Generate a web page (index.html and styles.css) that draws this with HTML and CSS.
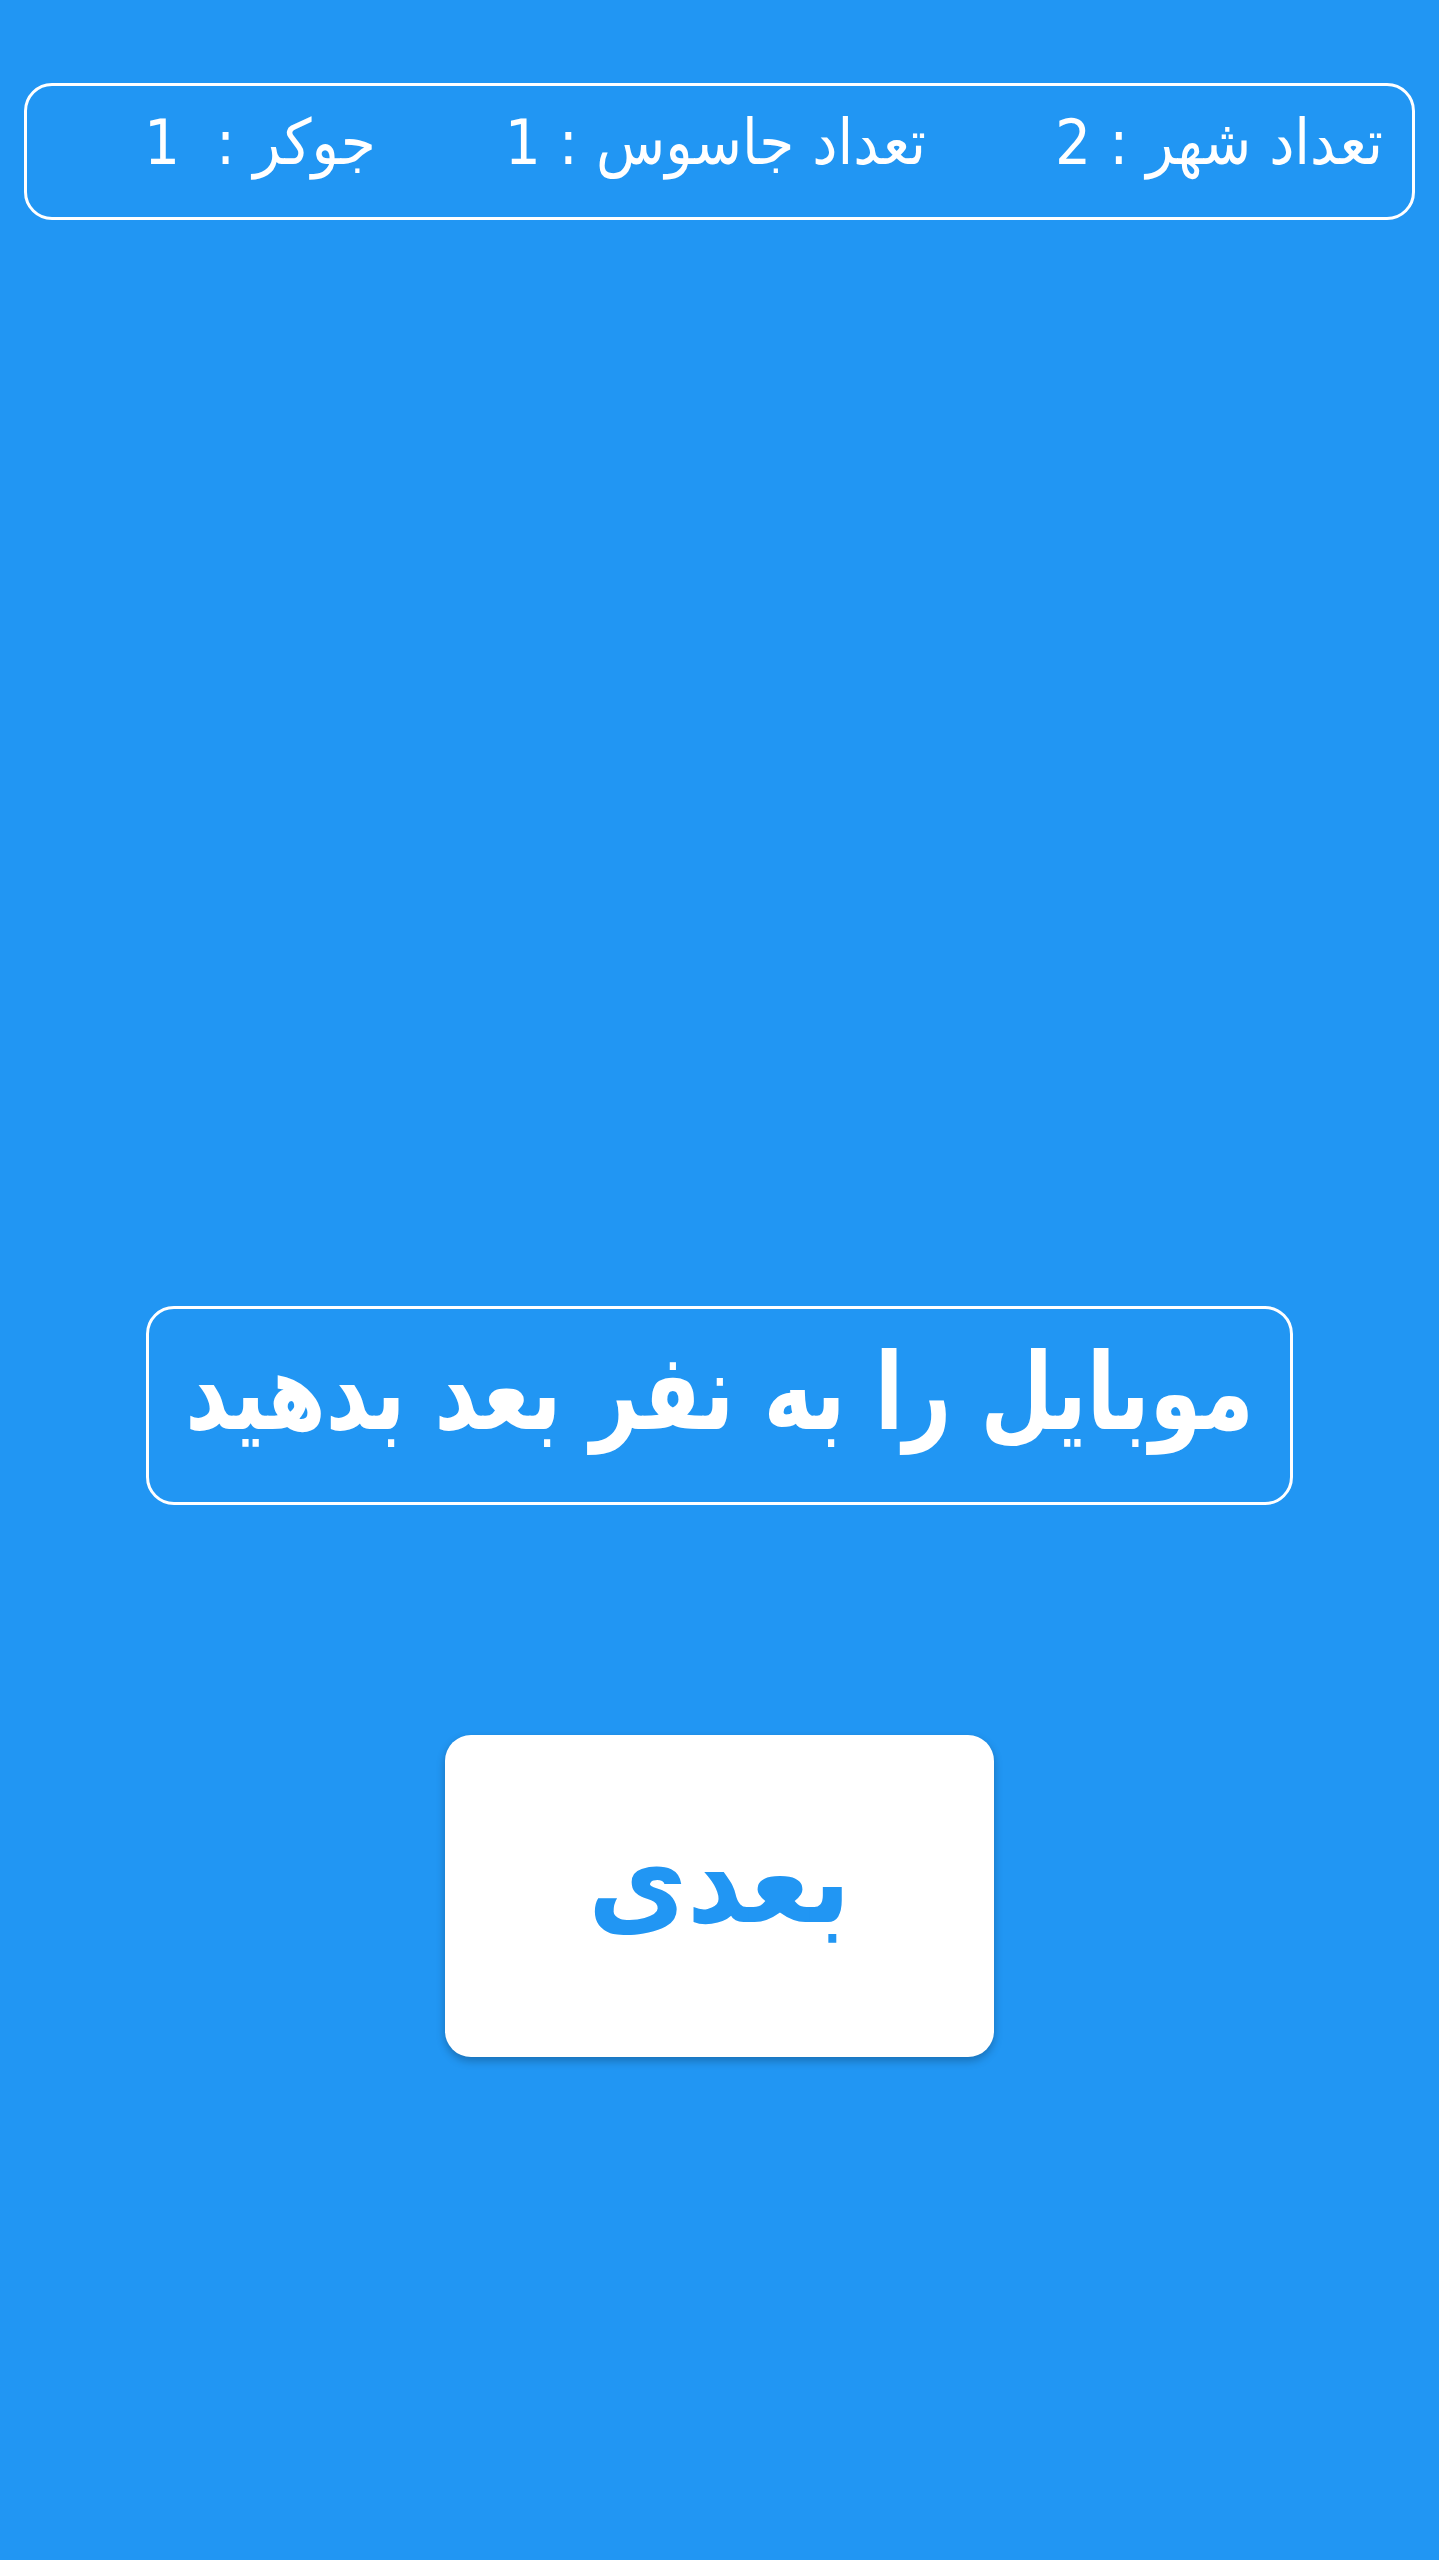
FILE: index.html
```html
<!DOCTYPE html>
<html lang="fa" dir="rtl">
<head>
    <meta charset="UTF-8">
    <meta name="viewport" content="width=device-width, initial-scale=1.0">
    <title>نقش بعدی</title>
    <link rel="stylesheet" href="styles.css">
</head>
<body>
    <div class="counts">
        <span class="count">تعداد شهر : 2</span>
        <span class="count">تعداد جاسوس : 1</span>
        <span class="count">جوکر :&nbsp; 1</span>
    </div>

    <div class="message"><span class="tall">موبایل را به نفر بعد بدهید</span></div>

    <button class="next-btn">بعدی</button>
</body>
</html>
```

FILE: styles.css
```css
html, body {
    margin: 0;
    height: 100%;
}
body {
    background: #2196f3;
    color: #fff;
    font-family: "DejaVu Sans Condensed", "DejaVu Sans", sans-serif;
    display: flex;
    flex-direction: column;
    align-items: center;
    padding: 83px 24px 0;
    box-sizing: border-box;
}
/* the app font is a touch taller than DejaVu */
.tall {
    display: inline-block;
    transform: scaleY(1.14);
}
.counts {
    align-self: stretch;
    height: 137px;
    border: 3px solid #fff;
    border-radius: 28px;
    box-sizing: border-box;
    display: flex;
    align-items: center;
    gap: 129px;
    padding: 0 29px 18px;
    font-size: 63px;
    line-height: 1;
}
.message {
    margin-top: 1086px;
    width: 1147px;
    height: 199px;
    border: 3px solid #fff;
    border-radius: 28px;
    box-sizing: border-box;
    display: flex;
    align-items: center;
    justify-content: center;
    padding-bottom: 24px;
    font-size: 93px;
    font-weight: bold;
    line-height: 1;
    white-space: nowrap;
}
.next-btn {
    margin-top: 230px;
    width: 549px;
    height: 322px;
    border: none;
    border-radius: 26px;
    background: #fff;
    color: #2196f3;
    font-family: inherit;
    font-size: 120px;
    font-weight: bold;
    line-height: 1;
    padding: 0 0 30px;
    box-shadow: 0 4px 8px rgba(0, 0, 0, 0.25);
    cursor: pointer;
}
```
